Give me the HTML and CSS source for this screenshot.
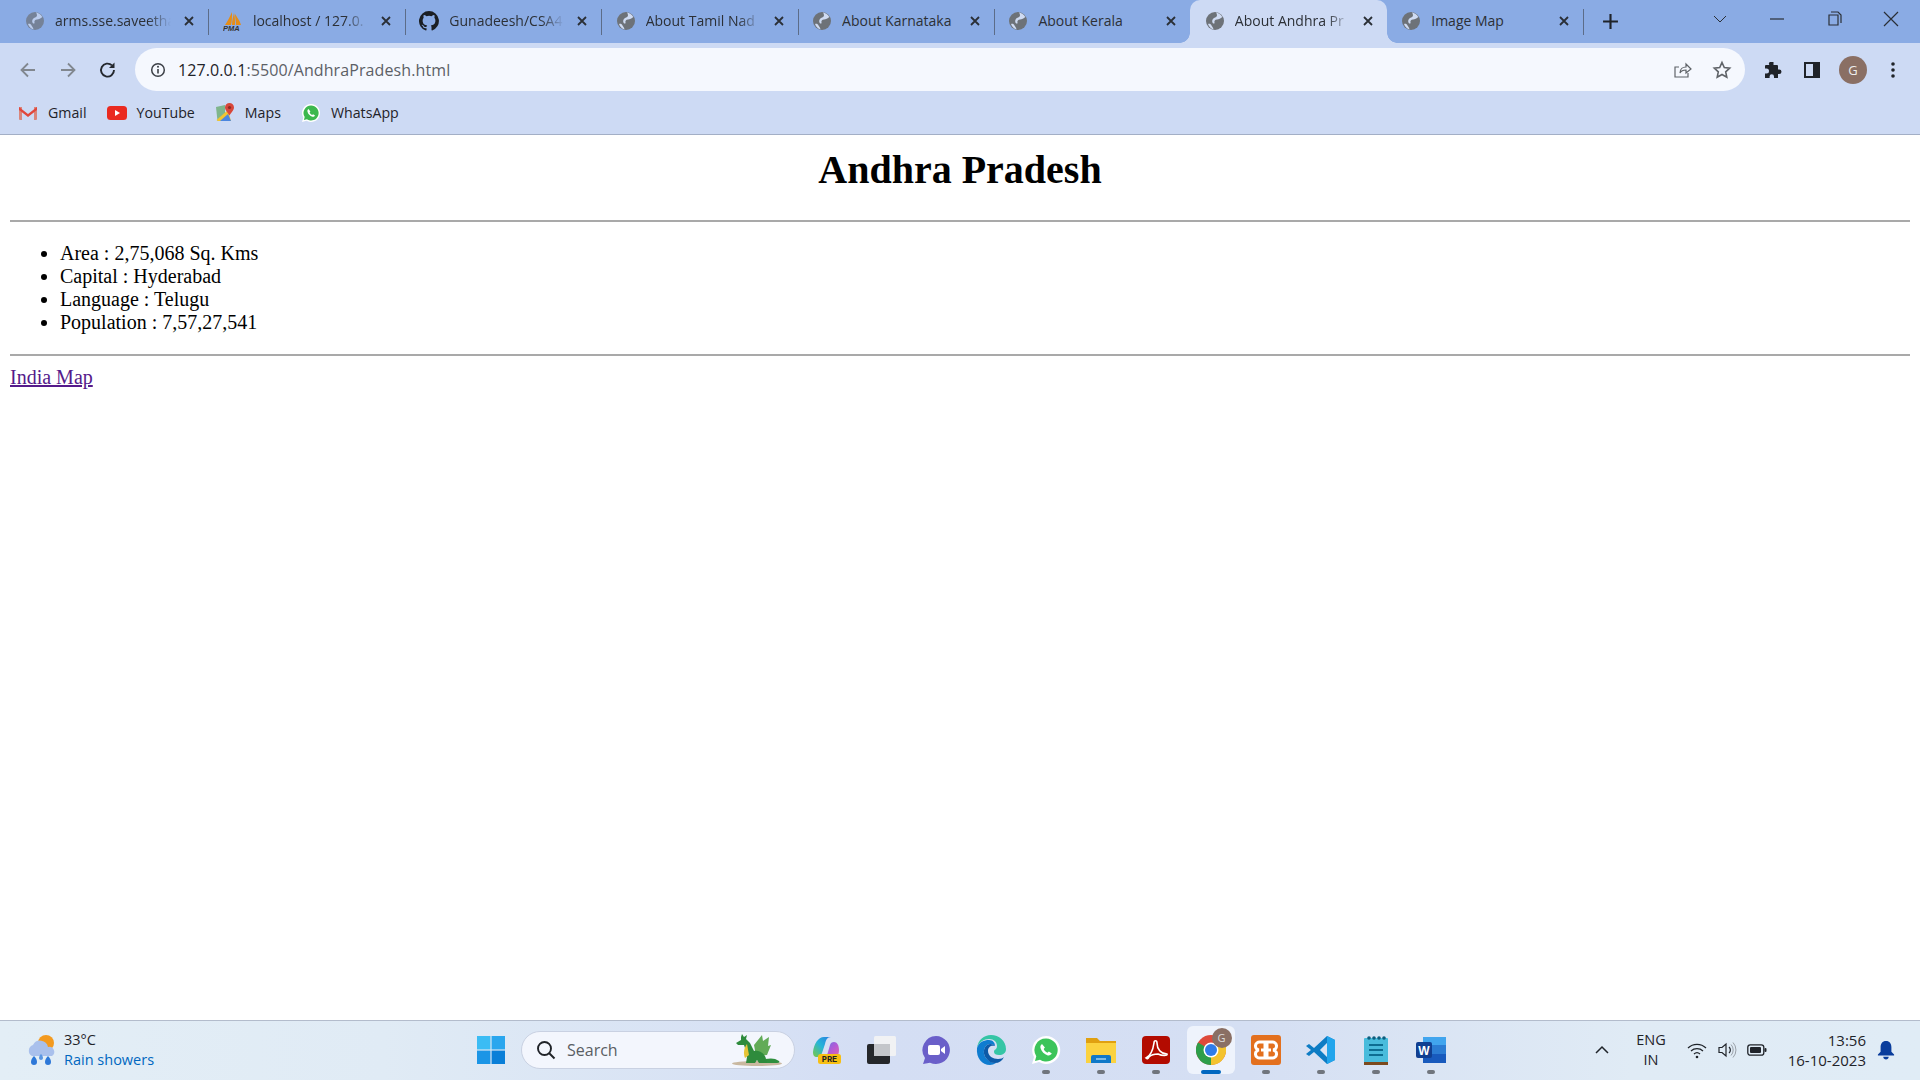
FILE: index.html
```html
<!DOCTYPE html>
<html lang="en">

<head>
    <meta charset="UTF-8">
    <title>About Andhra Pradesh</title>
    <link rel="stylesheet" href="styles.css">
</head>

<body>
    <svg class="defs" width="0" height="0">
        <defs>
            <linearGradient id="copilot-left" x1="0" y1="1" x2="1" y2="0">
                <stop offset="0" stop-color="#7ac943" />
                <stop offset="0.5" stop-color="#25b5d8" />
                <stop offset="1" stop-color="#2a7de1" />
            </linearGradient>
            <linearGradient id="copilot-right" x1="0" y1="0" x2="1" y2="1">
                <stop offset="0" stop-color="#4f7fe8" />
                <stop offset="0.5" stop-color="#b45ad6" />
                <stop offset="1" stop-color="#ef6aa0" />
            </linearGradient>
        </defs>
        <symbol id="globe" viewBox="0 0 20 20">
            <circle cx="10" cy="10" r="9" fill="#6d7278" />
            <path d="M11 1.500c2.500.3 5 2 6.300 4.500-1.500 1.500-3.500 2.500-5.300 2.500-2 0-3 1.500-2.500 3 .4 1.200-1 1.500-1.800.5-1-1.400-.5-4 1.300-5 1.500-.8 3-1 3-2.800 0-1-.5-1.800-1-2.700zM3 13c1.500-.5 3 0 3.500 1.500.5 1.200 1.500 1.800 2 3.800-2.500-.4-4.500-2.500-5.500-5.300z" fill="#cfdbf2" />
        </symbol>
        <symbol id="close" viewBox="0 0 12 12">
            <path d="M2 2l8 8M10 2l-8 8" stroke="#2a2f36" stroke-width="1.8" fill="none" />
        </symbol>
    </svg>

    <div class="tab-strip">
        <div class="tab">
            <svg class="favicon faded"><use href="#globe" /></svg>
            <span class="tab-title">arms.sse.saveetha</span>
            <svg class="tab-close"><use href="#close" /></svg>
        </div>
        <div class="tab">
            <svg class="favicon" viewBox="0 0 20 20">
                <path d="M2 14C5 10 7 5 9 1c0 5 0 9-1 13zM9 14c0-4 1-8 2-12 1 4 1 8 1 12zM13 14c0-4-1-8-1-11 2 3 5 7 6 11z" fill="#e58d17" />
                <text x="0" y="19.5" class="pma">PMA</text>
            </svg>
            <span class="tab-title">localhost / 127.0.</span>
            <svg class="tab-close"><use href="#close" /></svg>
        </div>
        <div class="tab">
            <svg class="favicon" viewBox="0 0 16 16">
                <path fill="#1b1f24" d="M8 0a8 8 0 0 0-2.53 15.59c.4.07.55-.17.55-.38v-1.49c-2.23.48-2.69-.96-2.69-.96-.36-.93-.89-1.18-.89-1.18-.73-.5.05-.49.05-.49.8.06 1.23.82 1.23.82.71 1.22 1.87.87 2.33.66.07-.52.28-.87.51-1.07-1.78-.2-3.64-.89-3.64-3.95 0-.87.31-1.59.82-2.15-.08-.2-.36-1.02.08-2.12 0 0 .67-.21 2.2.82a7.6 7.6 0 0 1 4 0c1.53-1.04 2.2-.82 2.2-.82.44 1.1.16 1.92.08 2.12.51.56.82 1.27.82 2.15 0 3.07-1.87 3.75-3.65 3.95.29.25.54.73.54 1.48v2.2c0 .21.15.46.55.38A8 8 0 0 0 8 0z" />
            </svg>
            <span class="tab-title">Gunadeesh/CSA4</span>
            <svg class="tab-close"><use href="#close" /></svg>
        </div>
        <div class="tab">
            <svg class="favicon"><use href="#globe" /></svg>
            <span class="tab-title">About Tamil Nad</span>
            <svg class="tab-close"><use href="#close" /></svg>
        </div>
        <div class="tab">
            <svg class="favicon"><use href="#globe" /></svg>
            <span class="tab-title no-fade">About Karnataka</span>
            <svg class="tab-close"><use href="#close" /></svg>
        </div>
        <div class="tab before-active">
            <svg class="favicon"><use href="#globe" /></svg>
            <span class="tab-title no-fade">About Kerala</span>
            <svg class="tab-close"><use href="#close" /></svg>
        </div>
        <div class="tab active">
            <svg class="favicon"><use href="#globe" /></svg>
            <span class="tab-title">About Andhra Pr</span>
            <svg class="tab-close"><use href="#close" /></svg>
        </div>
        <div class="tab">
            <svg class="favicon"><use href="#globe" /></svg>
            <span class="tab-title no-fade">Image Map</span>
            <svg class="tab-close"><use href="#close" /></svg>
        </div>
        <svg class="new-tab" viewBox="0 0 16 16"><path d="M8 1v14M1 8h14" stroke="#1f2329" stroke-width="2" /></svg>
        <div class="window-controls">
            <svg class="win-btn" viewBox="0 0 20 20"><path d="M4 7l6 6 6-6" stroke="#2a2f36" fill="none" /></svg>
            <svg class="win-btn" viewBox="0 0 20 20"><path d="M3 10h14" stroke="#2a2f36" stroke-width="1.2" /></svg>
            <svg class="win-btn" viewBox="0 0 20 20"><path d="M5 6h9v10H5zM7 3h7l3 3v8" stroke="#2a2f36" stroke-width="1.2" fill="none" /></svg>
            <svg class="win-btn" viewBox="0 0 20 20"><path d="M3 3l14 14M17 3L3 17" stroke="#2a2f36" stroke-width="1.2" /></svg>
        </div>
    </div>

    <div class="toolbar">
        <svg class="nav-btn" viewBox="0 0 20 20"><path d="M17 10H4M10 3.5L3.5 10l6.5 6.5" stroke="#81878f" stroke-width="1.8" fill="none" /></svg>
        <svg class="nav-btn" viewBox="0 0 20 20"><path d="M3 10h13M10 3.5l6.5 6.5-6.5 6.5" stroke="#81878f" stroke-width="1.8" fill="none" /></svg>
        <svg class="nav-btn" viewBox="0 0 20 20"><path d="M16 10a6.5 6.5 0 1 1-2-4.6" stroke="#24282e" stroke-width="1.9" fill="none" /><path d="M16.5 2.5v5.5H11z" fill="#24282e" /></svg>
        <div class="omnibox">
            <svg class="info-icon" viewBox="0 0 16 16">
                <circle cx="8" cy="8" r="6.3" stroke="#3c4047" stroke-width="1.5" fill="none" />
                <path d="M8 7v4.5" stroke="#3c4047" stroke-width="1.6" />
                <circle cx="8" cy="4.8" r="1" fill="#3c4047" />
            </svg>
            <span class="url"><span class="url-host">127.0.0.1</span>:5500/AndhraPradesh.html</span>
            <svg class="omni-icon" viewBox="0 0 20 20"><path d="M16 13v4H3V7h4M8 13c0-4 3-6 6-6V4l5 5-5 4v-3c-3 0-5 1-6 3z" stroke="#5f6368" stroke-width="1.2" fill="none" /></svg>
            <svg class="omni-icon" viewBox="0 0 20 20"><path d="M10 2.5l2.3 5 5.4.6-4 3.7 1.1 5.4L10 14.5l-4.800 2.700 1.100-5.400-4-3.700 5.400-.6z" stroke="#5f6368" stroke-width="1.6" fill="none" /></svg>
        </div>
        <div class="toolbar-actions">
            <svg class="action-icon" viewBox="0 0 20 20"><path d="M8 2h3.500v2.500a1.800 1.800 0 0 1 0 .5H15a1 1 0 0 1 1 1v3.500h1.200a2.300 2.300 0 0 1 0 4.600H16V18H12v-1.500a2.200 2.200 0 0 0-4.400 0V18H3v-4.500h1.500a2.500 2.500 0 0 0 0-5H3V6a1 1 0 0 1 1-1h3.500a1.800 1.800 0 0 1 .5-3z" fill="#1f2329" /></svg>
            <svg class="action-icon" viewBox="0 0 20 20"><path d="M3 3h14v14H3z" stroke="#1f2329" stroke-width="2" fill="none" /><path d="M11 3h6v14h-6z" fill="#1f2329" /></svg>
            <div class="avatar">G</div>
            <svg class="action-icon" viewBox="0 0 20 20"><circle cx="10" cy="4" r="1.800" fill="#1f2329" /><circle cx="10" cy="10" r="1.800" fill="#1f2329" /><circle cx="10" cy="16" r="1.800" fill="#1f2329" /></svg>
        </div>
    </div>

    <div class="bookmarks">
        <div class="bookmark">
            <svg class="bm-icon" viewBox="0 0 20 16">
                <path d="M1 2h3v13H2a1 1 0 0 1-1-1zM16 2h3v12a1 1 0 0 1-1 1h-2z" fill="#d9867c" />
                <path d="M1 2l9 7 9-7v3l-9 7-9-7z" fill="#e1473c" />
            </svg>
            <span>Gmail</span>
        </div>
        <div class="bookmark">
            <svg class="bm-icon" viewBox="0 0 20 16">
                <rect x="0" y="1" width="20" height="14" rx="3.500" fill="#ea2a20" />
                <path d="M8 5l5 3-5 3z" fill="#fff" />
            </svg>
            <span>YouTube</span>
        </div>
        <div class="bookmark">
            <svg class="bm-icon" viewBox="0 0 20 20">
                <path d="M1 4l9-2v16H2.500z" fill="#7fb58c" />
                <path d="M1.500 17L13 7l3 11H3z" fill="#f2c530" />
                <path d="M5 18l8-7 3 7z" fill="#4a86e0" />
                <path d="M14.500 0a4.500 4.500 0 0 1 4.500 4.500c0 3-3 5-4.500 8-1.500-3-4.500-5-4.500-8A4.500 4.500 0 0 1 14.500 0z" fill="#d8473a" />
                <circle cx="14.500" cy="4.500" r="1.600" fill="#8c2b23" />
            </svg>
            <span>Maps</span>
        </div>
        <div class="bookmark">
            <svg class="bm-icon" viewBox="0 0 20 20">
                <path d="M10 1a9 9 0 0 0-7.700 13.600L1 19l4.500-1.200A9 9 0 1 0 10 1z" fill="#fff" />
                <path d="M10 2.500a7.500 7.500 0 0 0-6.300 11.500l-.8 3 3-.8A7.500 7.500 0 1 0 10 2.500z" fill="#3cb84e" />
                <path d="M7.500 6c-.8.500-1.300 1.500-1 2.700.6 2.300 2.500 4.300 4.900 5 1.200.2 2.200-.3 2.600-1.200l-1.900-1.300-1 .8c-1.100-.5-2-1.400-2.500-2.500l.8-1z" fill="#fff" />
            </svg>
            <span>WhatsApp</span>
        </div>
    </div>

    <main class="page">
        <h1 class="page-title">Andhra Pradesh</h1>
        <hr class="rule">
        <ul class="facts">
            <li>Area : 2,75,068 Sq. Kms</li>
            <li>Capital : Hyderabad</li>
            <li>Language : Telugu</li>
            <li>Population : 7,57,27,541</li>
        </ul>
        <hr class="rule">
        <a class="map-link" href="#">India Map</a>
    </main>

    <footer class="taskbar">
        <div class="weather">
            <svg class="weather-icon" viewBox="0 0 34 34">
                <circle cx="22" cy="10" r="8" fill="#f39a1f" />
                <path d="M8 23a6 6 0 0 1 1-11 8 8 0 0 1 15 2 5 5 0 0 1 4 9z" fill="#a9c0ec" />
                <path d="M10 23c2 2 3 4 3 6s-1 3-3 3-3-1-3-3 1-4 3-6zM24 23c2 2 3 4 3 6s-1 3-3 3-3-1-3-3 1-4 3-6z" fill="#2d78d8" />
                <path d="M17 21c1.500 1.500 2 3 2 4s-1 2-2 2-2-1-2-2 .5-2.500 2-4z" fill="#5b96e2" />
            </svg>
            <div class="weather-text">
                <span>33°C</span>
                <span class="weather-desc">Rain showers</span>
            </div>
        </div>

        <div class="task-center">
            <div class="task-item">
                <svg class="task-icon win-logo" viewBox="0 0 24 24">
                    <path d="M0 0h11.500v11.500H0z" fill="#3bbcf4" />
                    <path d="M12.500 0H24v11.500H12.500z" fill="#2aa6ee" />
                    <path d="M0 12.500h11.500V24H0z" fill="#1b95e6" />
                    <path d="M12.500 12.500H24V24H12.500z" fill="#0a7fd8" />
                </svg>
            </div>
            <div class="search-box">
                <svg class="search-icon" viewBox="0 0 20 20"><circle cx="8.500" cy="8.500" r="6.500" stroke="#202328" stroke-width="1.900" fill="none" /><path d="M13 13l5.500 5.500" stroke="#202328" stroke-width="2" /></svg>
                <span class="search-label">Search</span>
                <svg class="dragon" viewBox="0 0 52 34">
                    <ellipse cx="25" cy="30.500" rx="25" ry="2.500" fill="#c9b8a0" />
                    <path d="M33 26c6-1 10-1 14 2 1 1 0 2-2 2H30z" fill="#2f8f3e" />
                    <path d="M22 12l8-10 1 6 6-4-1 9 3-1-4 10-11 1z" fill="#62ab57" />
                    <path d="M9 4l1-3 2 3 3-2-1 4 4 4 4 8c5-1 11 2 12 8l1 4H27l-2-3-2 3h-9l1-6-2-9-1-3-6 0-2-2 5-3z" fill="#2e8b3c" />
                    <path d="M15 11c-3 4-4 9-2 14l4-3z" fill="#e6c436" />
                </svg>
            </div>
            <div class="task-item">
                <svg class="task-icon" viewBox="0 0 30 30">
                    <path d="M2 17C3 9 7 2 13 2h7c-4 0-5 3-6 7l-3 9c-1 3-3 4-5 4-3 0-4-2-4-5z" fill="url(#copilot-left)" />
                    <path d="M10 24c4 0 6-3 7-7l2-7c.5-2 2-3 4-3 3 0 5 3 5 8 0 6-4 11-9 11h-9z" fill="url(#copilot-right)" />
                    <rect x="7" y="19" width="23" height="10" rx="2.500" fill="#f7bf12" />
                    <text x="18.500" y="27" class="pre-badge">PRE</text>
                </svg>
            </div>
            <div class="task-item">
                <svg class="task-icon" viewBox="0 0 30 30">
                    <rect x="1" y="9" width="23" height="20" rx="2" fill="#25272a" />
                    <rect x="8" y="1" width="22" height="20" rx="1.500" fill="#f1f2f4" />
                    <rect x="8" y="9" width="16" height="12" fill="#c4c6ca" />
                </svg>
            </div>
            <div class="task-item">
                <svg class="task-icon" viewBox="0 0 30 30">
                    <path d="M15 1a14 14 0 1 1-6 26.700L2 29l2-6A14 14 0 0 1 15 1z" fill="#6a5fc9" />
                    <rect x="7" y="10" width="12" height="10" rx="2" fill="#fff" />
                    <path d="M20 14l4-3v8l-4-3z" fill="#fff" />
                </svg>
            </div>
            <div class="task-item">
                <svg class="task-icon" viewBox="0 0 30 30">
                    <path d="M15 0c8 0 15 6 15 14 0 4-3 6-7 6-3 0-5-1-5-3 0-3 3-2 3-6S18 4 13 4 3 7 1 13C2 5 8 0 15 0z" fill="#35c5a5" />
                    <path d="M1 13C3 7 8 5 13 5c4 0 6 3 6 6-2-2-5-3-8-1-4 3-4 9-1 13 2 3 6 5 10 5-2 1-4 2-6 2C6 30 0 23 1 13z" fill="#0f7cd0" />
                    <path d="M10 23c-3-4-3-10 1-13 3-2 6-1 8 1-4-1-7 1-7 5 0 5 5 8 10 8 3 0 5-1 6-2-2 4-5 6-9 6-4 0-7-2-9-5z" fill="#0d5aa8" />
                </svg>
            </div>
            <div class="task-item running">
                <svg class="task-icon" viewBox="0 0 30 30">
                    <path d="M15 1a14 14 0 0 0-12 21L1 29l7-2A14 14 0 1 0 15 1z" fill="#fff" />
                    <path d="M15 3.500a11.500 11.500 0 0 0-9.700 17.700L4 26l5-1.300A11.500 11.500 0 1 0 15 3.500z" fill="#3cc45a" />
                    <path d="M11 9c-1 .700-2 2-1.500 4 1 3.500 3.800 6.400 7.300 7.400 1.800.3 3.200-.5 4-1.800l-2.900-2-1.500 1.200c-1.600-.7-3-2.100-3.700-3.700l1.200-1.500z" fill="#fff" />
                </svg>
            </div>
            <div class="task-item running">
                <svg class="task-icon" viewBox="0 0 30 30">
                    <path d="M0 3h11l3 3h16v4H0z" fill="#e0a010" />
                    <path d="M0 8h30v20H0z" fill="#fbd23f" />
                    <path d="M5 22a2 2 0 0 1 2-2h16a2 2 0 0 1 2 2v6H5z" fill="#0f78c8" />
                    <path d="M10 24h10" stroke="#9fd0f0" stroke-width="1.500" />
                </svg>
            </div>
            <div class="task-item running">
                <svg class="task-icon" viewBox="0 0 30 30">
                    <rect x="1" y="1" width="28" height="28" rx="4" fill="#b30b00" />
                    <path d="M5 23c4-2 7-8 8-15 0-3 3-3 3 0 0 6 4 11 10 11 1 2-5 2-9 0-3 0-7 1-9 3-1 2-2 2-3 1z" stroke="#fff" stroke-width="1.600" fill="none" />
                </svg>
            </div>
            <div class="task-item active-app">
                <svg class="task-icon" viewBox="0 0 30 30">
                    <circle cx="15" cy="15" r="15" fill="#de4a3b" />
                    <path d="M15 30A15 15 0 0 0 28 7.500L15 15z" fill="#f3c32e" />
                    <path d="M15 30A15 15 0 0 1 2 7.500L15 15z" fill="#2d9e4a" />
                    <circle cx="15" cy="15" r="7.500" fill="#fff" />
                    <circle cx="15" cy="15" r="6" fill="#2f7ce8" />
                </svg>
                <span class="chrome-badge">G</span>
            </div>
            <div class="task-item running">
                <svg class="task-icon" viewBox="0 0 30 30">
                    <rect x="0" y="0" width="30" height="30" rx="3" fill="#e3701e" />
                    <path d="M14 7H9a4 4 0 0 0-1 8 4 4 0 0 0 1 8h5zM16 7h5a4 4 0 0 1 1 8 4 4 0 0 1-1 8h-5z" stroke="#fff" stroke-width="3" fill="none" />
                    <path d="M10 15h10" stroke="#fff" stroke-width="3" />
                </svg>
            </div>
            <div class="task-item running">
                <svg class="task-icon" viewBox="0 0 30 30">
                    <path d="M21 1l8 4v20l-8 4L8 17l-5 4-3-2 5-4-5-4 3-2 5 4z" fill="#0d7cc4" />
                    <path d="M21 1l8 4v20l-8 4zM21 8l-7 7 7 7z" fill="#22a5ec" />
                    <path d="M21 8l-7 7 7 7z" fill="#d9e3f3" />
                </svg>
            </div>
            <div class="task-item running">
                <svg class="task-icon" viewBox="0 0 30 30">
                    <rect x="3" y="3" width="24" height="26" rx="1" fill="#49bcdc" />
                    <path d="M3 27h24v3H3z" fill="#7c4a1e" />
                    <path d="M8 10h14M8 15h14M8 20h14" stroke="#0d6e92" stroke-width="2" />
                    <circle cx="8" cy="3" r="1.800" fill="#0d5e7e" />
                    <circle cx="13" cy="3" r="1.800" fill="#0d5e7e" />
                    <circle cx="18" cy="3" r="1.800" fill="#0d5e7e" />
                    <circle cx="23" cy="3" r="1.800" fill="#0d5e7e" />
                </svg>
            </div>
            <div class="task-item running">
                <svg class="task-icon" viewBox="0 0 30 30">
                    <rect x="7" y="2" width="23" height="26" rx="2" fill="#2b7cd3" />
                    <rect x="7" y="2" width="23" height="8" fill="#41a5ee" />
                    <rect x="7" y="19" width="23" height="9" fill="#185abd" />
                    <rect x="0" y="7" width="16" height="16" rx="2" fill="#103f91" />
                    <text x="8" y="19.500" class="word-badge">W</text>
                </svg>
            </div>
        </div>

        <div class="tray">
            <svg class="tray-chevron" viewBox="0 0 16 10"><path d="M2 8l6-6 6 6" stroke="#1f2329" stroke-width="1.500" fill="none" /></svg>
            <div class="lang"><span>ENG</span><span>IN</span></div>
            <div class="tray-icons">
                <svg class="tray-icon" viewBox="0 0 20 20"><path d="M1 8a13 13 0 0 1 18 0M4 11a9 9 0 0 1 12 0M7 14a4.500 4.500 0 0 1 6 0" stroke="#1f2329" stroke-width="1.300" fill="none" /><circle cx="10" cy="17" r="1.300" fill="#1f2329" /></svg>
                <svg class="tray-icon" viewBox="0 0 20 20"><path d="M2 7.500h3l4-3.500v12l-4-3.500H2z" stroke="#1f2329" stroke-width="1.200" fill="none" /><path d="M12 7a4 4 0 0 1 0 6" stroke="#1f2329" stroke-width="1.200" fill="none" /><path d="M14 4.500a8 8 0 0 1 0 11M16 2.500a11 11 0 0 1 0 15" stroke="#9aa0a8" stroke-width="1" fill="none" /></svg>
                <svg class="tray-icon" viewBox="0 0 20 20"><rect x="0.800" y="4.800" width="16" height="10.400" rx="2.500" stroke="#1f2329" stroke-width="1.300" fill="none" /><rect x="3" y="7" width="11" height="6" rx="1" fill="#1f2329" /><rect x="17.500" y="8" width="2" height="4" rx="1" fill="#1f2329" /></svg>
            </div>
            <div class="clock"><span>13:56</span><span>16-10-2023</span></div>
            <svg class="bell" viewBox="0 0 20 22"><path d="M10 1c4 0 6 3 6 7v5l3 3v1H1v-1l3-3V8c0-4 2-7 6-7z" fill="#0a3d9c" /><path d="M7 18.500h6c0 2-1.500 3-3 3s-3-1-3-3z" fill="#0a3d9c" /></svg>
        </div>
    </footer>
</body>

</html>
```

FILE: styles.css
```css
* {
    box-sizing: border-box;
}

html,
body {
    height: 100%;
}

body {
    margin: 0;
    display: flex;
    flex-direction: column;
    overflow: hidden;
    background: #fff;
    font-family: "Open Sans", sans-serif;
    color: #1f2329;
}

.defs {
    position: absolute;
}

/* tabs */
.tab-strip {
    height: 43px;
    flex: none;
    display: flex;
    padding-left: 12px;
    background: #8aabe4;
}

.tab {
    width: 196.4px;
    flex: none;
    display: flex;
    align-items: center;
    padding: 0 13px 2px 14.5px;
    position: relative;
    font-size: 14px;
    color: #2c3036;
}

.tab:first-child {
    padding-left: 13px;
}

.tab::after {
    content: "";
    position: absolute;
    right: -1px;
    top: 9px;
    height: 26px;
    width: 1px;
    background: #5c6c88;
}

.tab.active {
    background: #cddaf4;
    border-radius: 10px 10px 0 0;
}

.tab.before-active::after {
    display: none;
}

.tab.active::before,
.tab.active::after {
    content: "";
    position: absolute;
    top: auto;
    bottom: 0;
    width: 10px;
    height: 10px;
    background: radial-gradient(circle at 0 0, transparent 9.5px, #cddaf4 10px);
}

.tab.active::before {
    left: -10px;
}

.tab.active::after {
    right: -10px;
    background: radial-gradient(circle at 100% 0, transparent 9.5px, #cddaf4 10px);
}

.favicon {
    width: 20px;
    height: 20px;
    flex: none;
    margin-right: 10px;
}

.favicon.faded {
    opacity: 0.7;
}

.pma {
    font: italic bold 7.5px "Liberation Sans", sans-serif;
    fill: #333;
}

.tab-title {
    flex: 1;
    min-width: 0;
    white-space: nowrap;
    overflow: hidden;
    -webkit-mask-image: linear-gradient(90deg, #000 80%, transparent 100%);
    mask-image: linear-gradient(90deg, #000 80%, transparent 100%);
}

.tab-title.no-fade {
    -webkit-mask-image: none;
    mask-image: none;
}

.tab-close {
    width: 12px;
    height: 12px;
    flex: none;
    margin-left: 12px;
}

.new-tab {
    width: 17px;
    height: 17px;
    flex: none;
    align-self: center;
    margin-left: 19px;
}

.window-controls {
    margin-left: auto;
    display: flex;
    align-items: center;
    gap: 37px;
    padding: 0 19px 6px 0;
}

.win-btn {
    width: 20px;
    height: 20px;
}

/* toolbar */
.toolbar {
    height: 48px;
    flex: none;
    display: flex;
    align-items: flex-start;
    padding: 5px 0 0 18px;
    background: #cddaf4;
}

.nav-btn {
    width: 20px;
    height: 20px;
    margin: 12px 20px 0 0;
    flex: none;
}

.omnibox {
    width: 1610px;
    height: 43px;
    margin-left: -3px;
    flex: none;
    display: flex;
    align-items: center;
    padding: 0 13px 0 15px;
    background: #f5f8fe;
    border-radius: 22px;
}

.info-icon {
    width: 16px;
    height: 16px;
    flex: none;
    margin-right: 12px;
}

.url {
    flex: 1;
    font-size: 16px;
    letter-spacing: 0.1px;
    color: #5c6066;
}

.url-host {
    color: #1f2329;
}

.omni-icon {
    width: 20px;
    height: 20px;
    margin-left: 20px;
}

.toolbar-actions {
    display: flex;
    align-items: center;
    height: 43px;
    padding-left: 17px;
    gap: 20px;
}

.action-icon {
    width: 20px;
    height: 20px;
    flex: none;
}

.avatar {
    width: 28px;
    height: 28px;
    margin: 0 -4px 0 -3px;
    border-radius: 50%;
    background: #8a6f64;
    color: #eee;
    font-size: 13px;
    display: flex;
    align-items: center;
    justify-content: center;
}

/* bookmarks */
.bookmarks {
    height: 44px;
    flex: none;
    display: flex;
    align-items: center;
    padding-left: 18px;
    gap: 20px;
    background: #cddaf4;
    border-bottom: 1px solid #a3afc6;
    font-size: 14.2px;
}

.bookmark {
    display: flex;
    align-items: center;
    gap: 10px;
}

.bm-icon {
    width: 20px;
    height: 20px;
    flex: none;
}

/* page */
.page {
    flex: 1;
    min-height: 0;
    padding: 11px 10px 0;
    font-family: "Liberation Serif", serif;
    font-size: 20px;
    color: #000;
}

.page-title {
    margin: 0 0 26.8px;
    font-size: 40px;
    text-align: center;
}

.rule {
    margin: 10px 0;
    border: 0;
    border-top: 2px solid #a9a9a9;
}

.facts {
    margin: 20px 0;
    padding-left: 50px;
}

.map-link {
    color: #551a8b;
}

/* taskbar */
.taskbar {
    height: 60px;
    flex: none;
    display: flex;
    align-items: center;
    padding-bottom: 2px;
    border-top: 1px solid #b3bccc;
    background: linear-gradient(90deg, #e3eef6 0%, #e0ebf5 20%, #d4def4 45%, #d5dff3 65%, #e0ebf5 85%, #e0ecf6 100%);
    font-size: 14.5px;
}

.weather {
    flex: 1;
    display: flex;
    align-items: center;
    gap: 6px;
    padding-left: 24px;
}

.weather-icon {
    width: 34px;
    height: 34px;
}

.weather-text {
    display: flex;
    flex-direction: column;
    line-height: 20px;
}

.weather-desc {
    color: #0067c0;
}

.task-center {
    display: flex;
    align-items: center;
    flex: none;
    padding-left: 2px;
}

.task-item {
    width: 55px;
    height: 48px;
    flex: none;
    display: flex;
    align-items: center;
    justify-content: center;
    position: relative;
    border-radius: 6px;
}

.task-icon {
    width: 30px;
    height: 30px;
}

.win-logo {
    width: 28px;
    height: 28px;
}

.running::after,
.active-app::after {
    content: "";
    position: absolute;
    left: 50%;
    bottom: 0;
    width: 8px;
    height: 4px;
    margin-left: -4px;
    border-radius: 2px;
    background: #70757d;
}

.active-app {
    width: 48px;
    margin: 0 3.5px;
    background: #eef3fc;
}

.active-app::after {
    width: 20px;
    margin-left: -10px;
    background: #0067c0;
}

.chrome-badge {
    position: absolute;
    top: 2px;
    right: 3px;
    width: 20px;
    height: 20px;
    border-radius: 50%;
    background: #8a6f64;
    color: #ddd;
    font-size: 11px;
    display: flex;
    align-items: center;
    justify-content: center;
}

.pre-badge {
    font: bold 8.5px "Liberation Mono", monospace;
    text-anchor: middle;
    fill: #222;
}

.word-badge {
    font: bold 12px "Liberation Sans", sans-serif;
    text-anchor: middle;
    fill: #fff;
}

.search-box {
    width: 274px;
    height: 38px;
    margin: 0 3px;
    flex: none;
    display: flex;
    align-items: center;
    padding: 0 10px 0 14px;
    background: #f3f6fd;
    border: 1px solid #c9d1e2;
    border-radius: 19px;
    font-size: 16px;
    color: #5a5e64;
}

.search-icon {
    width: 20px;
    height: 20px;
    flex: none;
    margin-right: 11px;
}

.search-label {
    flex: 1;
}

.dragon {
    width: 52px;
    height: 34px;
}

.tray {
    flex: 1;
    display: flex;
    align-items: center;
    justify-content: flex-end;
    padding-right: 25px;
}

.tray-chevron {
    width: 16px;
    height: 10px;
    margin-right: 26px;
}

.lang {
    display: flex;
    flex-direction: column;
    align-items: center;
    line-height: 20px;
    margin-right: 21px;
}

.tray-icons {
    display: flex;
    gap: 10px;
    margin-right: 21px;
}

.tray-icon {
    width: 20px;
    height: 20px;
}

.clock {
    display: flex;
    flex-direction: column;
    align-items: flex-end;
    font-size: 15px;
    line-height: 20px;
    margin-right: 11px;
}

.bell {
    width: 18px;
    height: 20px;
}
```
